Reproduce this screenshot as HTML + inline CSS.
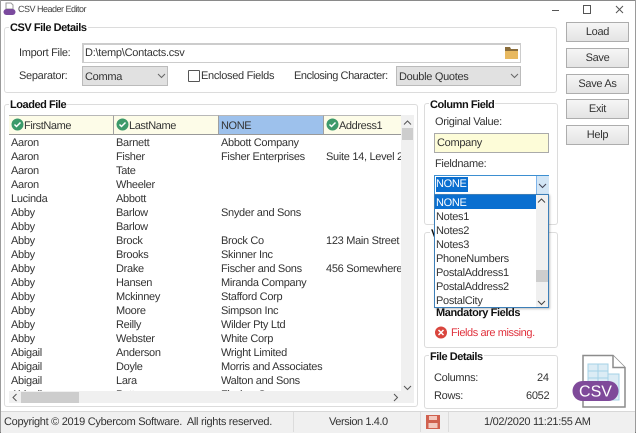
<!DOCTYPE html>
<html><head><meta charset="utf-8">
<style>
html,body{margin:0;padding:0;background:#fff}
#w{position:relative;width:636px;height:433px;overflow:hidden;background:#fff;font:11px "Liberation Sans",sans-serif;letter-spacing:-.3px;color:#333;text-rendering:geometricPrecision}
#w div,#w svg{position:absolute}
.t{white-space:nowrap;line-height:14px}
.b{font-weight:bold;color:#111;background:#fff;padding:0 1px;font-size:11px;letter-spacing:-.45px}
.g{border:1px solid #dcdcdc;border-radius:3px;box-sizing:border-box}
.btn{left:566px;width:63px;height:20px;box-sizing:border-box;border:1px solid #adadad;background:linear-gradient(#f6f6f6,#e4e4e4);text-align:center;line-height:19px;color:#333}
.h{top:115px;height:20px;box-sizing:border-box;background:#fdfce8;border-right:1px solid #a0a0a0;border-top:1px solid #b8b8b8;border-bottom:1px solid #999;line-height:20px;white-space:nowrap;letter-spacing:-.4px}
.sel{background:#e1e1e1;border:1px solid #bbb;box-sizing:border-box;line-height:20px;padding-left:2px}
.li{left:436px;width:100px;height:14px;line-height:14px;padding-left:0}
.l{letter-spacing:-.42px}
</style></head><body><div id="w">
<div style="left:0;top:0;width:636px;height:1px;background:#8a8a8a"></div>
<div style="left:0;top:0;width:1px;height:433px;background:#9a9a9a"></div>
<div style="left:635px;top:0;width:1px;height:433px;background:#9a9a9a"></div>
<div style="left:0;top:432px;width:636px;height:1px;background:#777"></div>

<svg style="left:3px;top:2px" width="13" height="14" viewBox="0 0 13 14"><path d="M3 1h5l2 2v4H3z" fill="#fff" stroke="#999"/><rect x="0.500" y="7" width="12" height="6" rx="3" fill="#7b4a9e"/></svg>
<div class="t" style="left:18px;top:2px;font-size:9px;letter-spacing:-.5px;color:#444">CSV Header Editor</div>
<svg style="left:550px;top:3px" width="80" height="14" viewBox="0 0 80 14" fill="none" stroke="#555"><path d="M2 7.500h7"/><rect x="33.500" y="2.500" width="7" height="8"/><path d="M66 3l7 7M73 3l-7 7"/></svg>

<!-- CSV details -->
<div class="g" style="left:4px;top:27px;width:553px;height:66px"></div>
<div class="t b" style="left:9px;top:21px">CSV File Details</div>
<div class="t" style="left:19px;top:46px">Import File:</div>
<div style="left:82px;top:43px;width:439px;height:20px;box-sizing:border-box;border:1px solid #ccc;border-width:2px 1px 1px 2px;background:#fff"></div>
<div class="t" style="left:85px;top:46px;letter-spacing:-.25px">D:\temp\Contacts.csv</div>
<svg style="left:504px;top:46px" width="15" height="14" viewBox="0 0 15 14"><path d="M1 1h5l1 2h7v2H1z" fill="#8a6d3b"/><path d="M1 5h13v8H1z" fill="#e8b960"/></svg>
<div class="t" style="left:19px;top:69px">Separator:</div>
<div class="sel" style="left:82px;top:66px;width:86px;height:20px">Comma</div>
<svg style="left:157px;top:73px" width="9" height="6" fill="none" stroke="#666"><path d="M1 1l3.500 3.500L8 1"/></svg>
<div style="left:188px;top:70px;width:10px;height:10px;border:1px solid #555;border-radius:1px;background:#fff"></div>
<div class="t" style="left:201px;top:69px">Enclosed Fields</div>
<div class="t l" style="left:294px;top:69px">Enclosing Character:</div>
<div class="sel" style="left:396px;top:66px;width:125px;height:20px">Double Quotes</div>
<svg style="left:510px;top:73px" width="9" height="6" fill="none" stroke="#666"><path d="M1 1l3.500 3.500L8 1"/></svg>

<!-- buttons -->
<div class="btn" style="top:22px">Load</div>
<div class="btn" style="top:48px">Save</div>
<div class="btn" style="top:74px">Save As</div>
<div class="btn" style="top:99px">Exit</div>
<div class="btn" style="top:125px">Help</div>

<!-- Loaded file -->
<div class="g" style="left:4px;top:104px;width:414px;height:303px"></div>
<div class="t b" style="left:9px;top:98px">Loaded File</div>
<div class="h" style="left:9px;width:105px;padding-left:15px"><span>FirstName</span></div>
<div class="h" style="left:114px;width:105px;padding-left:15px"><span>LastName</span></div>
<div class="h" style="left:219px;width:105px;background:#9dc1ec;padding-left:2px">NONE</div>
<div class="h" style="left:324px;width:77px;padding-left:15px;border-right:0"><span>Address1</span></div>
<svg style="left:11px;top:118px" width="13" height="13" viewBox="0 0 13 13"><circle cx="6.500" cy="6.500" r="6" fill="#3c9a6a"/><path d="M3.500 6.500l2 2 4-4" fill="none" stroke="#fff" stroke-width="1.500"/></svg>
<svg style="left:116px;top:118px" width="13" height="13" viewBox="0 0 13 13"><circle cx="6.500" cy="6.500" r="6" fill="#3c9a6a"/><path d="M3.500 6.500l2 2 4-4" fill="none" stroke="#fff" stroke-width="1.500"/></svg>
<svg style="left:326px;top:118px" width="13" height="13" viewBox="0 0 13 13"><circle cx="6.500" cy="6.500" r="6" fill="#3c9a6a"/><path d="M3.500 6.500l2 2 4-4" fill="none" stroke="#fff" stroke-width="1.500"/></svg>

<div style="left:9px;top:135px;width:392px;height:256px;overflow:hidden">
<div class="t" style="left:2px;top:1px;line-height:14px">Aaron<br>Aaron<br>Aaron<br>Aaron<br>Lucinda<br>Abby<br>Abby<br>Abby<br>Abby<br>Abby<br>Abby<br>Abby<br>Abby<br>Abby<br>Abby<br>Abigail<br>Abigail<br>Abigail<br>Abigail</div>
<div class="t" style="left:107px;top:1px;line-height:14px">Barnett<br>Fisher<br>Tate<br>Wheeler<br>Abbott<br>Barlow<br>Barlow<br>Brock<br>Brooks<br>Drake<br>Hansen<br>Mckinney<br>Moore<br>Reilly<br>Webster<br>Anderson<br>Doyle<br>Lara<br>Potter</div>
<div class="t" style="left:212px;top:1px;line-height:14px">Abbott Company<br>Fisher Enterprises<br><br><br><br>Snyder and Sons<br><br>Brock Co<br>Skinner Inc<br>Fischer and Sons<br>Miranda Company<br>Stafford Corp<br>Simpson Inc<br>Wilder Pty Ltd<br>White Corp<br>Wright Limited<br>Morris and Associates<br>Walton and Sons<br>Fischer Corp</div>
<div class="t" style="left:317px;top:1px;line-height:14px;width:75px;overflow:hidden">&nbsp;<br>Suite 14, Level 2<br><br><br><br><br><br>123 Main Street<br><br>456 Somewhere</div>
</div>
<!-- v scroll -->
<div style="left:401px;top:115px;width:13px;height:276px;background:#f0f0f0"></div>
<div style="left:402px;top:128px;width:11px;height:12px;background:#cdcdcd"></div>
<svg style="left:403px;top:120px" width="9" height="6" fill="none" stroke="#555"><path d="M1 4.500L4.500 1 8 4.500"/></svg>
<svg style="left:403px;top:385px" width="9" height="6" fill="none" stroke="#555"><path d="M1 1l3.500 3.500L8 1"/></svg>
<!-- h scroll -->
<div style="left:9px;top:391px;width:405px;height:12px;background:#f0f0f0"></div>
<div style="left:21px;top:392px;width:58px;height:11px;background:#cdcdcd"></div>
<svg style="left:12px;top:393px" width="6" height="9" fill="none" stroke="#555"><path d="M4.500 1L1 4.500 4.500 8"/></svg>
<svg style="left:393px;top:393px" width="6" height="9" fill="none" stroke="#555"><path d="M1 1l3.500 3.500L1 8"/></svg>

<!-- Column field -->
<div class="g" style="left:424px;top:103px;width:134px;height:122px"></div>
<div class="t b" style="left:429px;top:98px">Column Field</div>
<div class="t" style="left:435px;top:115px">Original Value:</div>
<div style="left:434px;top:133px;width:115px;height:20px;box-sizing:border-box;border:1px solid #aaa;background:#fdfcd8;line-height:18px;padding-left:2px">Company</div>
<div class="t" style="left:435px;top:157px">Fieldname:</div>
<div style="left:434px;top:175px;width:115px;height:20px;box-sizing:border-box;border:1px solid #3d8fd1;background:#fff"></div>
<div class="t" style="left:436px;top:177px;background:#0a6fd0;color:#fff;height:15px;padding:0 1px 0 0;line-height:15px">NONE</div>
<div style="left:536px;top:176px;width:12px;height:18px;background:#d3e6f6;border-left:1px solid #7eb4ea"></div>
<svg style="left:538px;top:183px" width="9" height="6" fill="none" stroke="#445"><path d="M1 1l3.500 3.500L8 1"/></svg>

<!-- validation -->
<div class="g" style="left:424px;top:232px;width:134px;height:116px"></div>
<div class="t b" style="left:430px;top:227px">V</div>
<div class="t b" style="left:435px;top:306px;background:none;letter-spacing:-.4px">Mandatory Fields</div>
<svg style="left:435px;top:326px" width="12" height="13" viewBox="0 0 12 12"><circle cx="6" cy="6" r="6" fill="#d9453d"/><path d="M3.500 3.500l5 5M8.500 3.500l-5 5" stroke="#fff" stroke-width="1.500"/></svg>
<div class="t l" style="left:451px;top:326px;color:#e0313c">Fields are missing.</div>

<!-- dropdown -->
<div style="left:434px;top:194px;width:115px;height:114px;box-sizing:border-box;border:1px solid #3d7fb8;background:#fff;box-shadow:1px 1px 2px rgba(0,0,0,.25)"></div>
<div style="left:435px;top:195px;width:101px;height:14px;background:#0a6fd0"></div>
<div class="t li" style="top:196px;color:#fff">NONE</div>
<div class="t li" style="top:210px">Notes1</div>
<div class="t li" style="top:224px">Notes2</div>
<div class="t li" style="top:238px">Notes3</div>
<div class="t li" style="top:252px">PhoneNumbers</div>
<div class="t li" style="top:266px">PostalAddress1</div>
<div class="t li" style="top:280px">PostalAddress2</div>
<div class="t li" style="top:294px">PostalCity</div>
<div style="left:536px;top:195px;width:12px;height:112px;background:#f0f0f0"></div>
<div style="left:536px;top:270px;width:12px;height:12px;background:#cdcdcd"></div>
<svg style="left:537px;top:198px" width="9" height="6" fill="none" stroke="#444"><path d="M1 4.500L4.500 1 8 4.500"/></svg>
<svg style="left:537px;top:300px" width="9" height="6" fill="none" stroke="#444"><path d="M1 1l3.500 3.500L8 1"/></svg>

<!-- File details -->
<div class="g" style="left:424px;top:355px;width:134px;height:54px"></div>
<div class="t b" style="left:429px;top:350px">File Details</div>
<div class="t" style="left:434px;top:371px">Columns:</div>
<div class="t" style="left:537px;top:371px">24</div>
<div class="t" style="left:434px;top:389px">Rows:</div>
<div class="t" style="left:526px;top:389px">6052</div>

<!-- CSV icon -->
<svg style="left:572px;top:354px" width="56" height="55" viewBox="0 0 56 55">
<path d="M11 1.500h30l12 12v39.500H11z" fill="#fff" stroke="#8c8c8c" stroke-width="1.500"/>
<path d="M41 1.500v12h12" fill="#fff" stroke="#8c8c8c" stroke-width="1.500"/>
<path d="M16 10h20v26H16zM16 17h20M16 24h20M26 10v26M36 20h11v26H20" fill="#dcecf5" stroke="#a5d2e6"/>
<rect x="0.500" y="27" width="46" height="20" rx="10" fill="#7f4a9a"/>
<text x="23.500" y="42.500" text-anchor="middle" font-family="Liberation Sans,sans-serif" font-size="16" fill="#fff" letter-spacing="0">CSV</text>
</svg>

<!-- status bar -->
<div style="left:1px;top:411px;width:634px;height:21px;background:#f0f0f0;border-top:1px solid #d8d8d8"></div>
<div style="left:293px;top:412px;width:1px;height:20px;background:#dcdcdc"></div>
<div style="left:420px;top:412px;width:1px;height:20px;background:#dcdcdc"></div>
<div style="left:448px;top:412px;width:1px;height:20px;background:#dcdcdc"></div>
<div class="t" style="left:4px;top:415px">Copyright © 2019 Cybercom Software.&nbsp; All rights reserved.</div>
<div class="t l" style="left:329px;top:415px">Version 1.4.0</div>
<svg style="left:426px;top:415px" width="14" height="14" viewBox="0 0 14 14"><path d="M0 0h14v14H0z" fill="#d0604e"/><rect x="3" y="1" width="8" height="4" fill="#f3c9bf"/><rect x="2.500" y="8" width="9" height="5" fill="#f3c9bf"/></svg>
<div class="t" style="left:484px;top:415px">1/02/2020 11:21:55 AM</div>
</div></body></html>
